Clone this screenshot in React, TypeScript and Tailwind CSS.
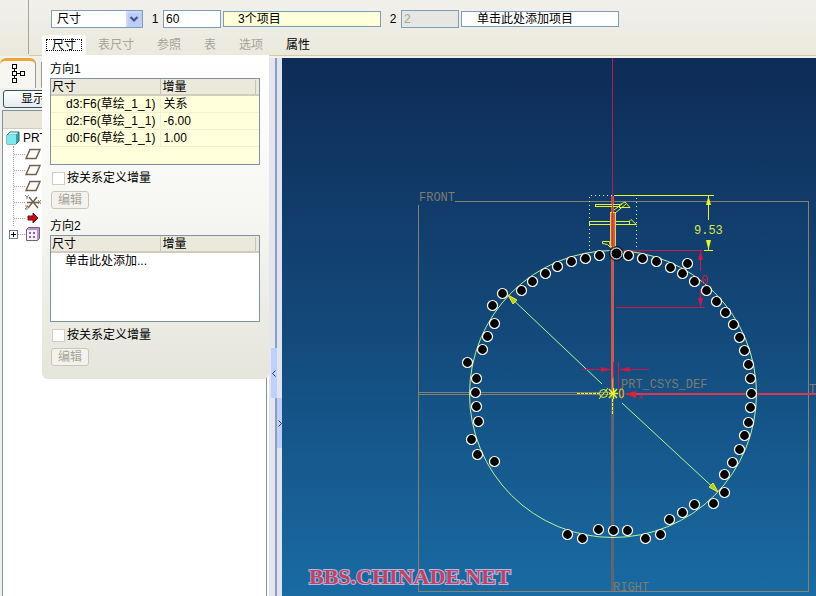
import { useState } from "react";

type Row = { name: string; value: string };

const rows: Row[] = [
  { name: "d3:F6(草绘_1_1)", value: "关系" },
  { name: "d2:F6(草绘_1_1)", value: "-6.00" },
  { name: "d0:F6(草绘_1_1)", value: "1.00" },
];

const tabs = [
  { label: "尺寸", enabled: true },
  { label: "表尺寸", enabled: false },
  { label: "参照", enabled: false },
  { label: "表", enabled: false },
  { label: "选项", enabled: false },
  { label: "属性", enabled: true },
];

// Pattern members, in model coordinates
const members = [
  [599, 255], [585, 258], [571, 261], [557, 266], [545, 273], [532, 281], [521, 290],
  [502, 293], [492, 305], [494, 323], [487, 336], [482, 349], [467, 362], [476, 378],
  [475, 392], [476, 406], [478, 421], [471, 439], [477, 454], [494, 461], [628, 255],
  [642, 258], [656, 261], [670, 267], [687, 263], [682, 273], [694, 281], [706, 290],
  [716, 301], [725, 312], [733, 324], [739, 337], [744, 350], [748, 364], [750, 378],
  [751, 393], [750, 407], [748, 422], [744, 435], [739, 449], [732, 462], [724, 474],
  [724, 492], [713, 503], [694, 504], [682, 512], [669, 519], [660, 534], [645, 538],
  [627, 530], [613, 530], [598, 529], [582, 538], [567, 534],
];

function Toolbar() {
  return (
    <header className="h-[58px] shrink-0 flex bg-gradient-to-b from-[#f1f0ec] to-[#ebe9dc] border-b-2 border-[#f3f1e8]">
      <div className="w-[29px] shrink-0 border-r border-[#a5a59c] mb-[2px]" />
      <div className="flex-1 pt-[10px] border-b border-[#d3cbb0]">
        <div className="flex items-center h-[18px] pl-[22px]">
          <div className="relative w-[92px] shrink-0">
            <select
              aria-label="阵列类型"
              className="block w-full h-[18px] pl-[5px] appearance-none bg-white border border-[#7f9db9] leading-4"
            >
              <option>尺寸</option>
            </select>
            <svg className="absolute right-px top-px pointer-events-none" width="16" height="16" viewBox="0 0 16 16">
              <rect width="16" height="16" rx="1" fill="#bccdf8" />
              <path d="M1 15V1h14" fill="none" stroke="#dce6fd" />
              <path d="M4.5 6L8 9.5 11.500 6" fill="none" stroke="#43567f" strokeWidth="2.200" />
            </svg>
          </div>
          <label htmlFor="count1" className="w-[20px] pl-1 text-center">1</label>
          <input id="count1" defaultValue="60" className="w-[58px] h-[18px] px-[2px] bg-white border border-[#7f9db9]" />
          <input
            aria-label="方向1 项目"
            readOnly
            value="3个项目"
            className="w-[158px] h-4 ml-[2px] pl-[14px] bg-[#ffffd9] border border-[#7f9db9]"
          />
          <label htmlFor="count2" className="w-[20px] pl-1 text-center">2</label>
          <input
            id="count2"
            defaultValue="2"
            disabled
            className="w-[58px] h-[18px] px-[2px] bg-[#e6e6e2] border border-[#7f9db9] text-[#a5a498]"
          />
          <input
            aria-label="方向2 项目"
            readOnly
            value="单击此处添加项目"
            className="w-[158px] h-4 ml-[2px] pl-[15px] bg-white border border-[#7f9db9]"
          />
        </div>
        <nav className="flex gap-px pl-[13px] mt-[7px] h-5">
          {tabs.map((tab, i) =>
            i === 0 ? (
              <button key={tab.label} className="w-[44px] bg-white rounded-t-sm flex justify-center pt-1">
                <span className="w-[36px] h-3 border border-dotted border-black leading-[10px]">{tab.label}</span>
              </button>
            ) : (
              <button key={tab.label} disabled={!tab.enabled} className="px-[11px] leading-5 disabled:text-[#a5a498]">
                {tab.label}
              </button>
            )
          )}
        </nav>
      </div>
    </header>
  );
}

function DirectionSection({ title, items, id }: { title: string; items: Row[]; id: string }) {
  const [byRelation, setByRelation] = useState(false);
  const filled = items.length > 0;

  return (
    <section className="pb-2">
      <h2 className="h-[17px] leading-4">{title}</h2>
      <div className={`h-[87px] border border-[#7f93a0] ${filled ? "bg-[#ffffdb]" : "bg-white"}`}>
        <table className="w-full table-fixed border-collapse">
          <thead>
            <tr className="h-4 bg-[#ebe9dc] border-b-2 border-[#d0cdbd] leading-[14px]">
              <th className="w-[109px] p-0 pl-px text-left font-normal border-r border-[#c6c4b4]">尺寸</th>
              <th className="p-0 pl-[2px] text-left font-normal">
                <span className="block mr-[3px] border-r border-[#c6c4b4]">增量</span>
              </th>
            </tr>
          </thead>
          <tbody>
            {items.map((row) => (
              <tr key={row.name} className="h-[17px] border-b border-[#f1f0d2] leading-4">
                <td className="p-0 pl-[15px] whitespace-nowrap border-r border-[#f1f0d2]">{row.name}</td>
                <td className="p-0 pl-[3px]">{row.value}</td>
              </tr>
            ))}
            {!filled && (
              <tr className="h-[17px] leading-4">
                <td colSpan={2} className="p-0 pl-[14px]">单击此处添加...</td>
              </tr>
            )}
          </tbody>
        </table>
      </div>
      <div className="flex items-center gap-[2px] h-4 mt-[5px] pl-[2px]">
        <input
          id={id}
          type="checkbox"
          checked={byRelation}
          onChange={(e) => setByRelation(e.target.checked)}
          className="appearance-none size-[13px] bg-white border border-[#cfcdc0] checked:bg-[#43567f]"
        />
        <label htmlFor={id}>按关系定义增量</label>
      </div>
      <button
        disabled={!byRelation}
        className="block w-[38px] h-[18px] mt-[5px] mb-px ml-px rounded-[3px] border border-[#c9c7ba] bg-[#f3f2ec] leading-4 disabled:text-[#a5a498]"
      >
        编辑
      </button>
    </section>
  );
}

function PlaneIcon() {
  return (
    <svg width="16" height="16" viewBox="0 0 16 16">
      <path d="M5 3.500h10l-4 9H1z" fill="#fff" stroke="#71604f" strokeWidth="1.500" />
    </svg>
  );
}

function CsysIcon() {
  return (
    <svg width="16" height="16" viewBox="0 0 16 16" fill="none" stroke="#71604f">
      <path d="M2 8.500h12M3 14L12 3M4 3l9 11" strokeWidth="1.400" />
      <path d="M0 1l2 2 2-2M2 3v2M13 6l3 4M16 6l-3 4M0 12h3l-3 3h3" strokeWidth=".8" />
    </svg>
  );
}

function ModelTree() {
  return (
    <aside className="w-[266px] shrink-0 flex flex-col bg-[#f1f0e8]">
      <div className="flex h-[30px]">
        <button
          aria-label="模型树"
          className="w-[36px] rounded-t-md border-t-[3px] border-t-[#eaa53b] border-r border-r-[#9a9b93] bg-[#f7f6f1] flex justify-center items-center pb-[3px]"
        >
          <svg width="14" height="20" viewBox="0 0 14 20" fill="none" stroke="#000" shapeRendering="crispEdges">
            <path d="M1.500 1.500h4v4h-4zM1.500 8.500h4v4h-4zM9.500 8.500h4v4h-4zM1.500 15.500h4v4h-4zM3.500 6v2M3.500 13v2M6 10.500h3" />
          </svg>
        </button>
        <div className="flex-1 mt-1 ml-[5px] border-l border-[#9a9b93] border-b border-b-[#c9c7ba]" />
      </div>
      <button className="w-[60px] h-[18px] mt-[2px] ml-[3px] rounded-[3px] border border-[#31546b] bg-gradient-to-b from-white to-[#e6ecef] leading-4">
        显示
      </button>
      <div className="flex-1 mt-[2px] ml-[2px] border-l border-t border-[#7f93a0] bg-white">
        <div className="h-[18px] bg-[#e9e6d9] border-b border-[#d0cdbd]" />
        <ul className="pl-[3px]">
          <li className="flex items-center gap-[3px] h-4 mt-[1px]">
            <svg width="14" height="14" viewBox="0 0 14 14">
              <path d="M1 4l3-3h9v9l-3 3H1z" fill="#3e9fa6" stroke="#246e78" />
              <path d="M1 4h9v9H1z" fill="#7ee9ec" />
              <path d="M2 3.500l2-2h8l-2 2z" fill="#c9ffff" />
            </svg>
            PRT
          </li>
          <li>
            <ul className="relative pl-[19px] before:absolute before:left-[7px] before:top-0 before:h-[80px] before:border-l before:border-dotted before:border-[#a0a0a0]">
              {["p1", "p2", "p3", "csys", "insert"].map((kind) => (
                <li key={kind} className="flex items-center h-4">
                  <span className="w-[11px] -ml-[11px] border-t border-dotted border-[#a0a0a0]" />
                  {kind === "csys" ? (
                    <CsysIcon />
                  ) : kind === "insert" ? (
                    <svg width="16" height="16" viewBox="0 0 16 16">
                      <path d="M3 6h5V3l5 5-5 5v-3H3z" fill="#c90d16" stroke="#6d1015" />
                    </svg>
                  ) : (
                    <PlaneIcon />
                  )}
                </li>
              ))}
              <li className="flex items-center h-4 -ml-4">
                <button aria-label="展开" className="size-[9px] border border-[#6f7f8a] bg-white">
                  <svg width="7" height="7" viewBox="0 0 7 7" shapeRendering="crispEdges">
                    <path d="M1 3.500h5M3.500 1v5" stroke="#000" />
                  </svg>
                </button>
                <span className="w-[7px] border-t border-dotted border-[#a0a0a0]" />
                <svg width="16" height="16" viewBox="0 0 16 16">
                  <path d="M1.500 3.500l2-2h11v11l-2 2h-11z" fill="#b795c4" stroke="#7a5b88" />
                  <path d="M2 4h10v10H2z" fill="#f6effa" />
                  <path d="M4 6h2v2H4zM8 6h2v2H8zM4 10h2v2H4zM8 10h2v2H8z" fill="#876a96" />
                </svg>
              </li>
            </ul>
          </li>
        </ul>
      </div>
    </aside>
  );
}

function Splitters() {
  return (
    <div className="w-4 shrink-0 flex border-l border-[#7f93a0] bg-white">
      <div className="w-[10px] pl-[2px] pt-[290px] bg-[#e4e5ee] border-l-2 border-l-white border-r-2 border-r-[#8f9cbd]">
        <button aria-label="折叠" className="w-[6px] h-[50px] bg-[#bfd0fa] flex items-center justify-center">
          <svg width="4" height="7" viewBox="0 0 4 7">
            <path d="M3.500 .5l-3 3 3 3" fill="none" stroke="#293c66" />
          </svg>
        </button>
      </div>
      <div className="flex-1 pt-[340px] bg-[#dfe5f0]">
        <button aria-label="展开" className="w-full h-[50px] bg-[#bfd0fa] flex items-center justify-center">
          <svg width="4" height="7" viewBox="0 0 4 7">
            <path d="M.5 .5l3 3-3 3" fill="none" stroke="#293c66" />
          </svg>
        </button>
      </div>
    </div>
  );
}

function Viewport() {
  return (
    <main className="relative flex-1 bg-gradient-to-b from-[#0e2c57] via-[#13497a] to-[#196ba3]">
      <svg
        className="absolute inset-0 size-full"
        viewBox="282 58 534 538"
        preserveAspectRatio="xMinYMin slice"
        fill="none"
      >
        {/* datum planes */}
        <g stroke="#85806f" shapeRendering="crispEdges">
          <path d="M418.500 205v386.500h390V201.500H455M418.500 392.500h195M418.500 394.500h195" />
        </g>
        <path d="M611 394h3v197h-3z" fill="#5f6672" />
        <path d="M612.500 58v138" stroke="#b31a4d" shapeRendering="crispEdges" />
        <path d="M611 196h3v198h-3z" fill="#c65a50" />
        <path d="M626 393.500h190" stroke="#d83850" strokeWidth="2" shapeRendering="crispEdges" />

        <g fill="#7d7a70" className="font-['Liberation_Mono'] text-[12px]">
          <text x="419" y="201">FRONT</text>
          <text x="621" y="388">PRT_CSYS_DEF</text>
          <text x="613" y="591">RIGHT</text>
          <text x="809" y="393">T</text>
        </g>

        {/* sketch circle and diameter */}
        <circle cx="613" cy="394" r="143.500" stroke="#b9f39a" />
        <path d="M508 295l94 89M622 403l96 89" stroke="#b9f39a" />
        <path d="M508 295l9 5-4 4zM718 492l-9-5 4-4z" fill="#b5c92e" stroke="#e3f52e" />

        {/* first feature section */}
        <path d="M589.500 250v-54.500h47V250" stroke="#e6f0c8" strokeDasharray="1 3" shapeRendering="crispEdges" />
        <g stroke="#e3f52e" shapeRendering="crispEdges">
          <path d="M614 195.500h100M704 250.500h9M708.500 196v24M708.500 240v10" />
          <path d="M595.500 204.500h24v2h-24zM589.500 221.500h40v3h-40z" />
        </g>
        <g stroke="#e3f52e">
          <path d="M619 205l6-3 5 5.500h-11M629 221.500l2-2 5.500 5H629" />
          <path d="M614 214l12-10M614 210l8-6M602.500 241.500h7l1 6-3-3-5-1z" />
        </g>
        <path d="M610.500 212.500h5V246h-5z" fill="#c65a50" stroke="#efd04a" shapeRendering="crispEdges" />
        <path d="M612.500 196v51" stroke="#c63a4d" shapeRendering="crispEdges" />
        <path d="M706 205l2.500-9 2.500 9zM706 240l2.500 10 2.500-10z" fill="#e3f52e" />
        <text x="694" y="234" fill="#d5e552" className="font-['Liberation_Mono'] text-[12px]">9.53</text>

        {/* increments */}
        <g stroke="#c91a4b" shapeRendering="crispEdges">
          <path d="M617 250.500h86M616 307.500h89M700.500 251v20M700.500 289v18" />
          <path d="M582 369.500h28M619 369.500h30M613.500 362v15M618.500 362v26" />
        </g>
        <path d="M698 260l2.500-9 2.500 9zM698 298l2.500 9 2.500-9zM601 367l10 2.500-10 2.500zM630 367l-11 2.500 11 2.500z" fill="#c91a4b" />
        <path d="M636 391l-11 3 11 4z" fill="#d8203f" />
        <text x="701" y="284" fill="#c91a4b" className="font-['Liberation_Mono'] text-[12px]">0</text>
        <text x="638" y="399" fill="#c91a4b" className="font-['Liberation_Mono'] text-[8px]">x</text>

        {/* centre */}
        <g stroke="#e3f52e">
          <path d="M577 393.500h22M612.500 399v16" strokeDasharray="3 1" shapeRendering="crispEdges" />
          <circle cx="603.500" cy="393.500" r="4" />
          <path d="M599 399l9-11" />
          <path d="M609 389l8 9M617 389l-8 9M609 393.500h9M613.500 388v11" strokeWidth="1.500" />
          <path d="M619.500 393.500c0-6 4-6 4 0s-4 5-4 0z" stroke="#e0a040" strokeWidth="1.500" />
          <path d="M612.500 379v9" stroke="#e0a040" />
        </g>

        <circle cx="616.500" cy="253.500" r="7" stroke="#111" />
        <circle cx="616.500" cy="253.500" r="5.500" fill="#000" stroke="#fff" />
        {members.map(([x, y]) => (
          <circle key={`${x}-${y}`} cx={x + 0.5} cy={y + 0.5} r="5" fill="#000" stroke="#fff" strokeWidth="1.200" />
        ))}

        <text
          x="309"
          y="584"
          fill="#bf4264"
          stroke="#b9b4dd"
          strokeWidth="2"
          paintOrder="stroke"
          className="font-['Liberation_Serif'] font-bold text-[22px]"
        >
          BBS.CHINADE.NET
        </text>
      </svg>
    </main>
  );
}

export default function App() {
  return (
    <div className="relative min-h-screen flex flex-col overflow-hidden bg-[#ece9d8] text-black text-[12px] leading-4 font-['Liberation_Sans','Noto_Sans_CJK_SC',sans-serif]">
      <Toolbar />
      <div className="flex-1 flex">
        <ModelTree />
        <Splitters />
        <Viewport />
      </div>

      {/* Slide-down panel of the active tab */}
      <div className="absolute z-10 left-[42px] top-[55px] w-[227px] pt-[6px] pl-2 pr-[9px] pb-1 rounded-b-md bg-gradient-to-b from-white via-[#f6f6f3] to-[#e5e5db]">
        <DirectionSection id="relation1" title="方向1" items={rows} />
        <DirectionSection id="relation2" title="方向2" items={[]} />
      </div>
    </div>
  );
}
